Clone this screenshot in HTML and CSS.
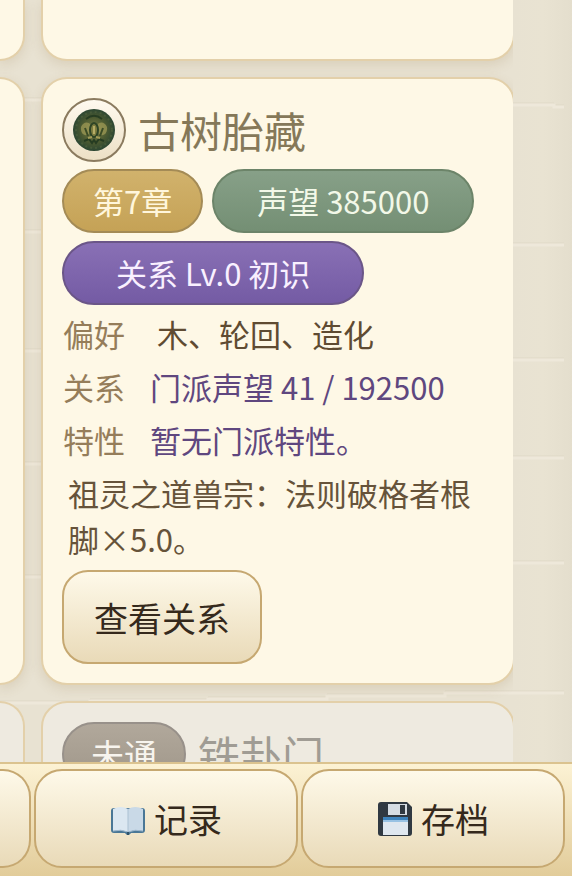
FILE: index.html
```html
<!DOCTYPE html>
<html lang="zh-CN">
<head>
    <meta charset="UTF-8">
    <meta name="viewport" content="width=device-width, initial-scale=1.0">
    <title>门派</title>
    <link rel="stylesheet" href="styles.css">
</head>
<body>
    <main class="page">
        <!-- Garis latar -->
        <svg class="backdrop" aria-hidden="true">
            <g class="line-shade">
                <path d="M24 98H42M24 230H42M24 349H42M24 462H42M24 575H42M0 701H90V699H208V697H327V694H445V691H564"/>
                <path d="M513 103H554V105H564M513 243H564M513 358H564M513 456H564M513 561H564"/>
            </g>
            <g class="line-light">
                <path d="M24 100H42M24 232H42M24 351H42M24 464H42M24 577H42M0 703H90V701H208V699H327V696H445V693H564"/>
                <path d="M513 105H554V107H564M513 245H564M513 360H564M513 458H564M513 563H564"/>
            </g>
        </svg>

        <div class="sect-grid">
            <section class="card card-side card-cut"></section>
            <section class="card card-cut"></section>

            <section class="card card-side"></section>
            <section class="card">
                <header class="card-head">
                    <svg class="emblem" viewBox="0 0 64 64" aria-hidden="true">
                        <defs>
                            <linearGradient id="ring" x1="0" y1="0" x2="0" y2="1">
                                <stop offset="0" stop-color="#fffaf0"/>
                                <stop offset="1" stop-color="#ecdfc4"/>
                            </linearGradient>
                            <radialGradient id="seal">
                                <stop offset="0" stop-color="#7d8148"/>
                                <stop offset="0.6" stop-color="#4c5a31"/>
                                <stop offset="1" stop-color="#2c4632"/>
                            </radialGradient>
                        </defs>
                        <circle cx="32" cy="32" r="31" fill="url(#ring)" stroke="#8b7b5f" stroke-width="2"/>
                        <circle cx="32" cy="32" r="21" fill="url(#seal)"/>
                        <circle cx="32" cy="32" r="18" fill="none" stroke="#6b7a4b" stroke-width="2" stroke-dasharray="2 3" opacity="0.3"/>
                        <path d="M19 29c2-5 7-6 10-2l-1 8c-4 5-10 1-9-6zM45 29c-2-5-7-6-10-2l1 8c4 5 10 1 9-6z" fill="#a39c57" opacity="0.7"/>
                        <path d="M23 30l3 8M41 30l-3 8" stroke="#3c4c26" stroke-width="2"/>
                        <ellipse cx="32" cy="32" rx="4" ry="7" fill="#7d7d40" stroke="#2f4526" stroke-width="2"/>
                        <path d="M32 28v8" stroke="#b7ad66" stroke-width="2"/>
                        <path d="M22 43l5-2 3 4 2-3 2 3 3-4 5 2M24 21c5-4 11-4 16 0" fill="none" stroke="#263c22" stroke-width="2"/>
                        <path d="M26 40l4-1M34 39l4 1" stroke="#a39c57" stroke-width="2"/>
                    </svg>
                    <h2 class="card-title">古树胎藏</h2>
                </header>
                <div class="tags">
                    <span class="tag tag-chapter">第7章</span>
                    <span class="tag tag-fame">声望 385000</span>
                    <span class="tag tag-relation">关系 Lv.0 初识</span>
                </div>
                <dl class="info">
                    <div class="info-row"><dt>偏好</dt><dd>&nbsp;木、轮回、造化</dd></div>
                    <div class="info-row accent"><dt>关系</dt><dd>门派声望 41 / 192500</dd></div>
                    <div class="info-row accent"><dt>特性</dt><dd>暂无门派特性。</dd></div>
                </dl>
                <p class="desc">祖灵之道兽宗：法则破格者根脚×5.0。</p>
                <button type="button" class="btn btn-view">查看关系</button>
            </section>

            <section class="card card-side card-locked"></section>
            <section class="card card-locked">
                <header class="card-head">
                    <span class="tag tag-locked">未通</span>
                    <h2 class="card-title">铁卦门</h2>
                </header>
            </section>
        </div>
    </main>

    <nav class="bottom-nav">
        <button type="button" class="btn nav-btn nav-btn-side" aria-label="更多"></button>
        <button type="button" class="btn nav-btn">
            <svg class="icon" viewBox="0 0 36 36" aria-hidden="true">
                <path d="M4 7h28q3 0 3 3v19q0 3-3 3H21q-1 2-3 2t-3-2H4q-3 0-3-3V10q0-3 3-3z" fill="#4a7796"/>
                <path d="M3 8q8-4 15 0v23q-7-3-15-1z" fill="#dbe7f1"/>
                <path d="M33 8q-8-4-15 0v23q7-3 15-1z" fill="#c9d9e7"/>
                <path d="M18 8v22" stroke="#abc1d3" stroke-width="1"/>
                <path d="M3 30q8-2 15 1 7-3 15-1" fill="none" stroke="#9fb8cd" stroke-width="1"/>
                <path d="M18 31v3" stroke="#2f5269" stroke-width="2"/>
            </svg>
            <span>记录</span>
        </button>
        <button type="button" class="btn nav-btn">
            <svg class="icon" viewBox="0 0 36 36" aria-hidden="true">
                <path d="M4 1h26l5 5v26q0 3-3 3H4q-3 0-3-3V4q0-3 3-3z" fill="#303942"/>
                <path d="M11 3h19v11H11z" fill="#d5dce3"/>
                <path d="M23 4h5v9h-5z" fill="#303942"/>
                <path d="M6 16h25v18H6z" fill="#dfe7ef"/>
                <path d="M6 16h25v3H6z" fill="#3d83bd"/>
                <path d="M6 19h25v2H6z" fill="#99c2e3"/>
            </svg>
            <span>存档</span>
        </button>
    </nav>
</body>
</html>
```
FILE: styles.css
```css
* {
    box-sizing: border-box;
}
body {
    font-family: "Noto Sans CJK SC", "Noto Sans", sans-serif;
    margin: 0;
    height: 100vh;
    display: flex;
    flex-direction: column;
    overflow: hidden;
    font-size: 31px;
    color: #5f4b32;
    background-color: #e8e2d2;
}
h2, p, dl, dd {
    margin: 0;
}
.page {
    position: relative;
    flex: 1;
    min-height: 0;
    overflow: hidden;
    background: linear-gradient(to right, #e8e2d2 0%, #e8e2d2 90%, #e9e3d2 95%, #e4decd 100%);
}
.backdrop {
    position: absolute;
    top: 0;
    left: 0;
    width: 100%;
    height: 100%;
    fill: none;
}
.line-shade {
    stroke: #dfd8c6;
    stroke-width: 1;
}
.line-light {
    stroke: #eee8da;
    stroke-width: 3;
}

/* Sect cards */
.sect-grid {
    position: relative;
    height: 100%;
    margin-right: 59px;
    overflow: hidden;
    display: grid;
    grid-template-columns: 25px 1fr;
    grid-template-rows: 61px auto auto;
    align-content: start;
    gap: 16px;
}
.card {
    margin-right: -2px;
    padding: 19px;
    border: 2px solid #e3d0aa;
    border-radius: 26px;
    background-color: #fef8e6;
    box-shadow: 0 4px 12px rgba(140, 115, 65, 0.16);
}
.card-side {
    margin-right: 0;
    padding: 0;
    border-left: none;
    border-radius: 0 26px 26px 0;
}
.card-cut {
    border-top: none;
    border-radius: 0 0 26px 26px;
}
.card-side.card-cut {
    border-radius: 0 0 26px 0;
}
.card-locked {
    background-color: #eeeae0;
    box-shadow: none;
}
.card-head {
    display: flex;
    align-items: center;
    gap: 12px;
    margin-bottom: 7px;
}
.emblem {
    width: 64px;
    height: 64px;
    flex: none;
}
.card-title {
    font-size: 42px;
    font-weight: 400;
    line-height: 64px;
    color: #857859;
}
.card-locked .card-title {
    color: #a09c94;
}

/* Tags */
.tags {
    display: flex;
    flex-wrap: wrap;
    gap: 8px 9px;
}
.tag {
    height: 64px;
    line-height: 60px;
    border: 2px solid;
    border-radius: 32px;
    text-align: center;
    white-space: nowrap;
}
.tag-chapter {
    padding: 0 29px;
    color: #fff6dc;
    border-color: #a48b56;
    background: linear-gradient(#d1b26c, #c5a256);
}
.tag-fame {
    padding: 0 43px;
    color: #f2f8e8;
    border-color: #6c8469;
    background: linear-gradient(#87a088, #748f74);
}
.tag-relation {
    padding: 0 52px;
    color: #f9f0ff;
    border-color: #6b5688;
    background: linear-gradient(#8970b5, #745ba4);
}
.tag-locked {
    padding: 0 27px;
    font-size: 33px;
    color: #f7f4ee;
    border-color: #98918a;
    background: linear-gradient(#b1a89b, #9f9689);
}

/* Info rows */
.info {
    margin-top: 2px;
    padding-left: 1px;
}
.info-row {
    display: flex;
    gap: 25px;
    line-height: 53px;
}
.info-row dt {
    color: #957d5a;
}
.accent dd {
    color: #5f477f;
}
.desc {
    margin-top: 4px;
    padding-left: 6px;
    line-height: 46px;
    color: #66533a;
}

/* Buttons */
.btn {
    font-family: inherit;
    font-size: 34px;
    color: #35291c;
    border: 2px solid #c6a871;
    border-radius: 26px;
    background: linear-gradient(#fef9e9, #e9dab8);
    cursor: pointer;
}
.btn-view {
    display: block;
    height: 94px;
    margin-top: 8px;
    padding: 0 30px;
}

/* Bottom navigation */
.bottom-nav {
    display: grid;
    grid-template-columns: 31px 1fr 1fr;
    gap: 3px;
    padding: 5px 7px 8px 0;
    border-top: 2px solid #dbc38f;
    background: linear-gradient(#fcf2d4, #e2cc9a);
}
.nav-btn {
    height: 99px;
    padding: 0;
    display: flex;
    justify-content: center;
    align-items: center;
    gap: 8px;
    border-radius: 28px;
}
.nav-btn-side {
    border-left: none;
    border-radius: 0 28px 28px 0;
}
.icon {
    width: 36px;
    height: 36px;
}
```
